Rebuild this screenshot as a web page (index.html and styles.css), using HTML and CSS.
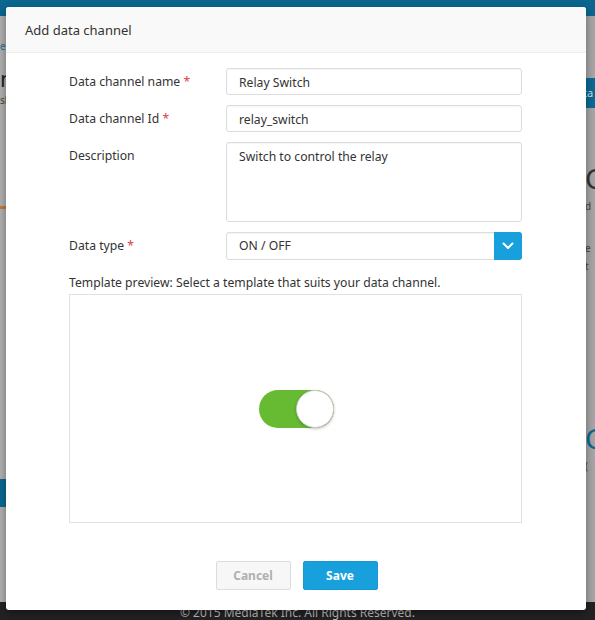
FILE: index.html
```html
<!DOCTYPE html>
<html>
<head>
<meta charset="utf-8">
<link rel="stylesheet" href="styles.css">
</head>
<body>
<div class="page">
  <div class="topbar"></div>
  <div class="content">
    <div class="side left">
      <div class="crumb">e</div>
      <div class="big">n</div>
      <div class="small">sl</div>
      <div class="orange"></div>
      <div class="blueblock"></div>
    </div>
    <div class="middle"></div>
    <div class="side right">
      <div class="btnta">ta</div>
      <div class="bigc">C</div>
      <div class="small gap">d</div>
      <div class="small gap2">e</div>
      <div class="small gap">t</div>
      <div class="bigc blue">C</div>
      <div class="small gap">(</div>
    </div>
  </div>
  <div class="footer">© 2015 MediaTek Inc. All Rights Reserved.</div>
</div>

<div class="modal">
  <div class="modal-header">Add data channel</div>
  <div class="modal-body">
    <div class="row">
      <label class="lbl">Data channel name <span class="req">*</span></label>
      <div class="field input">Relay Switch</div>
    </div>
    <div class="row">
      <label class="lbl">Data channel Id <span class="req">*</span></label>
      <div class="field input">relay_switch</div>
    </div>
    <div class="row">
      <label class="lbl">Description</label>
      <div class="field textarea">Switch to control the relay</div>
    </div>
    <div class="row">
      <label class="lbl">Data type <span class="req">*</span></label>
      <div class="field select">
        <span class="select-text">ON / OFF</span>
        <span class="select-btn">
          <svg width="12" height="8" viewBox="0 0 12 8"><path d="M1.5 1.5 L6 6 L10.5 1.5" fill="none" stroke="#fff" stroke-width="2" stroke-linecap="round" stroke-linejoin="round"/></svg>
        </span>
      </div>
    </div>
    <div class="preview-label">Template preview: Select a template that suits your data channel.</div>
    <div class="preview">
      <div class="toggle"><div class="knob"></div></div>
    </div>
    <div class="actions">
      <button class="btn cancel">Cancel</button>
      <button class="btn save">Save</button>
    </div>
  </div>
</div>
</body>
</html>
```
FILE: styles.css
```css
* { box-sizing: border-box; }
html, body { margin: 0; padding: 0; }
body {
  width: 595px;
  height: 620px;
  overflow: hidden;
  font-family: "Noto Sans", "Open Sans", sans-serif;
  background: #9c9c9c;
  position: relative;
}
.page {
  height: 620px;
  display: flex;
  flex-direction: column;
}
.topbar {
  height: 16px;
  background: #0c668f;
}
.content {
  flex: 1;
  display: flex;
  justify-content: space-between;
  background: #a3a3a3;
}
.side {
  display: flex;
  flex-direction: column;
  overflow: hidden;
}
.side.left { background: #b0b0b0; width: 8px; }
.side.right { width: 12px; background: #a6a6a6; padding-left: 2px; }
.crumb { font-size: 10px; color: #2a6d8f; margin-top: 24px; line-height: 12px; }
.big { font-size: 22px; color: #222; line-height: 24px; margin-top: 14px; }
.small { font-size: 10px; color: #444; line-height: 12px; margin-top: 4px; }
.orange { height: 3px; background: #c07d3c; margin-top: 100px; }
.blueblock { height: 28px; background: #0b6a93; margin-top: 270px; }
.btnta { margin-top: 62px; height: 30px; background: #0b6a93; color: #cde; font-size: 11px; line-height: 30px; margin-left: -2px; }
.bigc { font-size: 28px; color: #333; margin-top: 54px; line-height: 32px; }
.small.gap { margin-top: 6px; }
.small.gap2 { margin-top: 30px; }
.bigc.blue { color: #0b6a93; margin-top: 150px; }
.middle { flex: 1; }
.footer {
  height: 18px;
  background: #222;
  color: #bbb;
  font-size: 12px;
  text-align: center;
  line-height: 20px;
  padding-top: 1px;
  margin-top: -8px;
  position: relative;
}

.modal {
  position: absolute;
  left: 6px;
  top: 7px;
  width: 580px;
  height: 603px;
  background: #fff;
  border-radius: 3px;
  box-shadow: 0 3px 9px rgba(0,0,0,0.4);
  color: #333;
  font-size: 12.2px;
}
.modal-header {
  height: 46px;
  background: #f9f9f9;
  border-bottom: 1px solid #eee;
  border-radius: 3px 3px 0 0;
  padding: 14px 19px;
  font-size: 13px;
  line-height: 18px;
}
.modal-body {
  padding: 15px 63px 0 63px;
}
.row {
  display: flex;
  margin-bottom: 10px;
}
.lbl {
  width: 157px;
  padding-top: 5px;
  line-height: 17px;
  color: #333;
}
.req { color: #e04040; }
.field {
  width: 296px;
  border: 1px solid #dcdcdc;
  border-radius: 3px;
  padding: 5px 12px;
  line-height: 17px;
  color: #333;
  box-shadow: inset 0 1px 1px rgba(0,0,0,0.04);
}
.input { height: 27px; }
.textarea { height: 80px; padding-top: 5px; }
.select {
  height: 28px;
  display: flex;
  padding: 0 0 0 12px;
  align-items: stretch;
}
.select-text { flex: 1; line-height: 26px; }
.select-btn {
  width: 28px;
  margin: -1px -1px -1px 0;
  background: #18a0dd;
  border-radius: 0 3px 3px 0;
  display: flex;
  align-items: center;
  justify-content: center;
}
.preview-label {
  padding-top: 4px;
  line-height: 17px;
  height: 24px;
}
.preview {
  width: 453px;
  height: 229px;
  border: 1px solid #e2e2e2;
  display: flex;
  align-items: center;
  justify-content: center;
}
.toggle {
  width: 75px;
  height: 38px;
  border-radius: 19px;
  background: #66bb33;
  position: relative;
  margin-left: 1px;
}
.knob {
  position: absolute;
  right: 0;
  top: 0;
  width: 38px;
  height: 38px;
  border-radius: 50%;
  background: #fff;
  border: 1px solid #ccc;
  box-shadow: 0 1px 3px rgba(0,0,0,0.25);
}
.actions {
  display: flex;
  justify-content: center;
  gap: 12px;
  margin-top: 38px;
  padding-left: 1px;
}
.btn {
  width: 75px;
  height: 29px;
  border-radius: 2px;
  font-family: "Noto Sans", "Open Sans", sans-serif;
  font-size: 12px;
  font-weight: bold;
  cursor: pointer;
}
.cancel {
  background: #f7f7f7;
  border: 1px solid #dcdcdc;
  color: #b0b0b0;
}
.save {
  background: #18a0dd;
  border: 1px solid #1799d4;
  color: #fff;
}
```
